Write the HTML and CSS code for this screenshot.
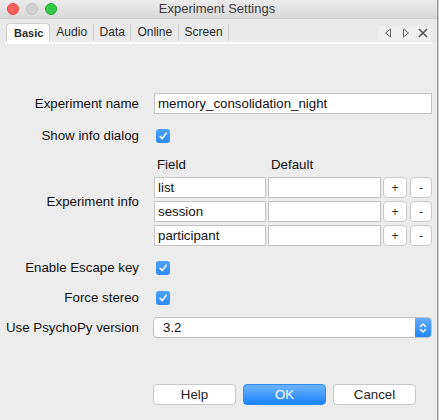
FILE: index.html
```html
<!DOCTYPE html>
<html>
<head>
<meta charset="utf-8">
<link rel="stylesheet" href="styles.css">
</head>
<body>
<div class="window">
  <div class="titlebar">
    <div class="lights">
      <span class="light red"></span>
      <span class="light gray"></span>
      <span class="light green"></span>
    </div>
    <div class="title">Experiment Settings</div>
  </div>
  <div class="tabbar">
    <div class="tabs">
      <div class="tab active">Basic</div>
      <div class="tab">Audio</div>
      <div class="tab">Data</div>
      <div class="tab">Online</div>
      <div class="tab">Screen</div>
    </div>
    <div class="tabnav">
      <svg width="8" height="10" viewBox="0 0 8 10"><path d="M6.5 1 L1.5 5 L6.5 9 Z" fill="none" stroke="#666" stroke-width="1"/></svg>
      <svg width="8" height="10" viewBox="0 0 8 10"><path d="M1.5 1 L6.5 5 L1.5 9 Z" fill="none" stroke="#666" stroke-width="1"/></svg>
      <svg class="close" width="10" height="10" viewBox="0 0 10 10"><path d="M1 1 L9 9 M9 1 L1 9" stroke="#555" stroke-width="1.6"/></svg>
    </div>
  </div>
  <div class="tabline"></div>
  <div class="content">
    <div class="form">
      <div class="label">Experiment name</div>
      <div class="control"><div class="input wide">memory_consolidation_night</div></div>

      <div class="label">Show info dialog</div>
      <div class="control"><span class="check"><svg width="10" height="10" viewBox="0 0 10 10"><path d="M2 5.2 L4.2 7.6 L8.2 2.2" fill="none" stroke="#fff" stroke-width="1.5" stroke-linecap="round" stroke-linejoin="round"/></svg></span></div>

      <div class="label">Experiment info</div>
      <div class="control info">
        <div class="info-grid">
          <div class="head">Field</div>
          <div class="head">Default</div>
          <div></div>
          <div></div>

          <div class="input">list</div>
          <div class="input"></div>
          <div class="pm">+</div>
          <div class="pm">-</div>

          <div class="input">session</div>
          <div class="input"></div>
          <div class="pm">+</div>
          <div class="pm">-</div>

          <div class="input">participant</div>
          <div class="input"></div>
          <div class="pm">+</div>
          <div class="pm">-</div>
        </div>
      </div>

      <div class="label">Enable Escape key</div>
      <div class="control"><span class="check"><svg width="10" height="10" viewBox="0 0 10 10"><path d="M2 5.2 L4.2 7.6 L8.2 2.2" fill="none" stroke="#fff" stroke-width="1.5" stroke-linecap="round" stroke-linejoin="round"/></svg></span></div>

      <div class="label">Force stereo</div>
      <div class="control"><span class="check"><svg width="10" height="10" viewBox="0 0 10 10"><path d="M2 5.2 L4.2 7.6 L8.2 2.2" fill="none" stroke="#fff" stroke-width="1.5" stroke-linecap="round" stroke-linejoin="round"/></svg></span></div>

      <div class="label">Use PsychoPy version</div>
      <div class="control">
        <div class="select">
          <span class="select-value">3.2</span>
          <span class="select-arrows"><svg width="8" height="12" viewBox="0 0 8 12"><path d="M1.5 4.5 L4 2 L6.5 4.5 M1.5 7.5 L4 10 L6.5 7.5" fill="none" stroke="#fff" stroke-width="1.4" stroke-linecap="round" stroke-linejoin="round"/></svg></span>
        </div>
      </div>
    </div>
    <div class="buttons">
      <div class="btn">Help</div>
      <div class="btn primary">OK</div>
      <div class="btn">Cancel</div>
    </div>
  </div>
</div>
</body>
</html>
```

FILE: styles.css
```css
html, body {
  margin: 0;
  padding: 0;
}
body {
  width: 439px;
  height: 420px;
  overflow: hidden;
  background: #c9c9c9;
  font-family: "Liberation Sans", Arial, sans-serif;
  font-size: 13.3px;
  color: #111;
}
.window {
  width: 437px;
  height: 420px;
  border-right: 1px solid #9a9a9a;
  background: #ececec;
  display: flex;
  flex-direction: column;
}
.titlebar {
  height: 18px;
  display: flex;
  align-items: center;
  position: relative;
  background: linear-gradient(#ebebeb, #d8d8d8);
  border-bottom: 1px solid #d0d0d0;
}
.lights {
  display: flex;
  gap: 7px;
  padding-left: 7px;
}
.light {
  width: 12px;
  height: 12px;
  border-radius: 50%;
  box-sizing: border-box;
}
.light.red { background: #fc605c; border: 1px solid #e04a44; }
.light.gray { background: #d1d1d1; border: 1px solid #c0c0c0; }
.light.green { background: #35c84a; border: 1px solid #20a933; }
.title {
  position: absolute;
  left: 0;
  right: 0;
  top: 1px;
  text-align: center;
  color: #3c3c3c;
  font-size: 13px;
  padding-right: 3px;
}
.tabbar {
  height: 23px;
  display: flex;
  align-items: flex-end;
  justify-content: space-between;
  background: #e9e9e9;
  padding: 0 6px 0 6px;
}
.tabs {
  display: flex;
  align-items: flex-end;
  height: 19px;
}
.tab {
  height: 17px;
  padding: 0 5.5px 0 6px;
  font-size: 12px;
  color: #2a2a2a;
  border-right: 1px solid #cfcfcf;
  line-height: 16px;
  margin-bottom: 1px;
}
.tab.active {
  background: #fff;
  font-weight: bold;
  font-size: 11px;
  height: 18px;
  line-height: 19px;
  margin-bottom: 0;
  padding: 0 6px 0 7px;
  border: 1px solid #cdcdcd;
  border-bottom: none;
  border-radius: 4px 4px 0 0;
}
.tabnav {
  display: flex;
  align-items: center;
  gap: 10px;
  height: 14px;
  padding: 0 3px 0 6px;
  margin-bottom: 2px;
  background: #efefef;
}
.tabnav .close {
  margin-left: -2px;
}
.tabline {
  height: 2px;
  margin: 0 5px;
  background: #ffffff;
}
.content {
  flex: 1;
  display: flex;
  flex-direction: column;
}
.form {
  margin-top: 49px;
  display: grid;
  grid-template-columns: 139px 278px;
  grid-template-rows: 21px 21px 89px 21px 17px 21px;
  column-gap: 15px;
  row-gap: 11px;
}
.label {
  text-align: right;
  display: flex;
  align-items: center;
  justify-content: flex-end;
  white-space: nowrap;
}
.control {
  display: flex;
  align-items: center;
}
.input {
  box-sizing: border-box;
  height: 21px;
  background: #fff;
  border: 1px solid #c3c3c3;
  padding: 0 3px;
  line-height: 19px;
  white-space: nowrap;
  overflow: hidden;
}
.input.wide {
  width: 278px;
}
.check {
  margin-left: 2px;
  margin-top: 1px;
  width: 14px;
  height: 14px;
  border-radius: 3px;
  background: linear-gradient(#4aa2fb, #2f8bf6);
  display: flex;
  align-items: center;
  justify-content: center;
}
.info-grid {
  display: grid;
  grid-template-columns: 112px 113px 24px 22px;
  grid-template-rows: 17px 21px 21px 21px;
  column-gap: 2px;
  row-gap: 3px;
  width: 278px;
}
.info-grid .pm:nth-child(4n) {
  margin-left: 1px;
  margin-right: -1px;
}
.head {
  padding-left: 3px;
  line-height: 15px;
}
.pm {
  box-sizing: border-box;
  height: 21px;
  background: #fff;
  border: 1px solid #c9c9c9;
  border-radius: 4px;
  display: flex;
  align-items: center;
  justify-content: center;
  font-size: 12px;
  color: #333;
}
.select {
  box-sizing: border-box;
  margin-left: -1px;
  width: 280px;
  height: 21px;
  background: #fff;
  border: 1px solid #c2c2c2;
  border-radius: 4px;
  display: flex;
  align-items: stretch;
  overflow: hidden;
}
.select-value {
  flex: 1;
  padding-left: 9px;
  line-height: 19px;
}
.select-arrows {
  width: 16px;
  background: linear-gradient(#64aefb, #1f84f8);
  display: flex;
  align-items: center;
  justify-content: center;
}
.buttons {
  margin-top: 46px;
  margin-left: 153px;
  display: flex;
  gap: 7px;
}
.btn {
  box-sizing: border-box;
  width: 83px;
  height: 21px;
  background: #fff;
  border: 1px solid #c6c6c6;
  border-radius: 4px;
  display: flex;
  align-items: center;
  justify-content: center;
  color: #1e1e1e;
}
.btn.primary {
  background: linear-gradient(#6db3fb, #1d83fb);
  border-color: #2c8af5;
  color: #fff;
}
```
